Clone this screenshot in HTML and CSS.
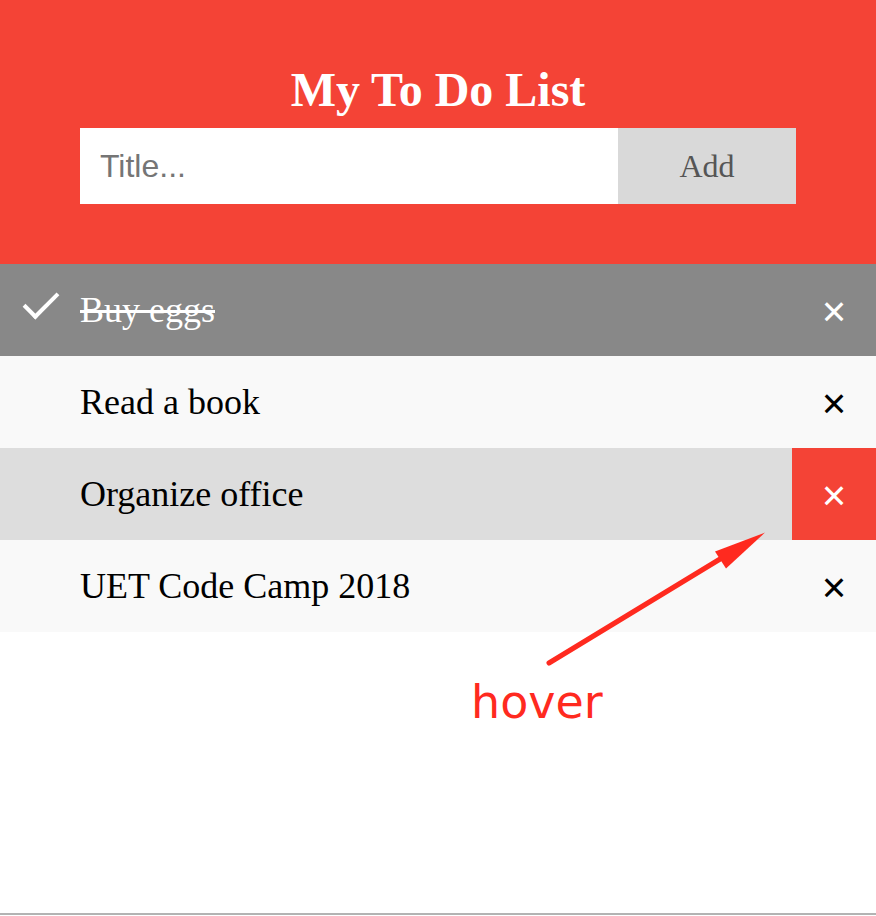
FILE: index.html
```html
<!DOCTYPE html>
<html>
<head>
<meta charset="utf-8">
<link rel="stylesheet" href="styles.css">
</head>
<body>
<div class="page">
  <div class="header">
    <h2 class="title">My To Do List</h2>
    <div class="form">
      <input class="field" type="text" placeholder="Title...">
      <span class="add-btn">Add</span>
    </div>
  </div>
  <ul class="list">
    <li class="item checked">Buy eggs<span class="close">×</span></li>
    <li class="item">Read a book<span class="close">×</span></li>
    <li class="item hovered">Organize office<span class="close">×</span></li>
    <li class="item">UET Code Camp 2018<span class="close">×</span></li>
  </ul>
  <svg class="arrow" width="876" height="916" viewBox="0 0 876 916">
    <line x1="549" y1="663" x2="730" y2="553" stroke="#ff2a1f" stroke-width="5" stroke-linecap="round"/>
    <polygon points="765,532.5 715,551.5 726,568.5" fill="#ff2a1f"/>
  </svg>
  <div class="note">hover</div>
  <div class="bottom-line"></div>
</div>
</body>
</html>
```
FILE: styles.css
```css
html, body {
  margin: 0;
  padding: 0;
  background: #fff;
}
.page {
  position: relative;
  display: flex;
  flex-direction: column;
  min-height: 916px;
  font-family: "Liberation Serif", serif;
}
.header {
  background: #f44336;
  padding: 62px 80px 60px;
}
.title {
  margin: 0 0 10px;
  color: #fff;
  text-align: center;
  font-size: 48px;
  line-height: 56px;
  font-weight: bold;
}
.form {
  display: flex;
  height: 76px;
}
.field {
  flex: 1;
  min-width: 0;
  border: none;
  margin: 0;
  padding: 0 20px;
  height: 76px;
  box-sizing: border-box;
  font-family: "Liberation Sans", sans-serif;
  font-size: 32px;
  outline: none;
  background: #fff;
}
.field::placeholder {
  color: #757575;
}
.add-btn {
  width: 178px;
  background: #d9d9d9;
  color: #555;
  font-size: 32px;
  display: flex;
  align-items: center;
  justify-content: center;
}
.list {
  margin: 0;
  padding: 0;
  list-style: none;
}
.item {
  position: relative;
  padding: 24px 84px 24px 80px;
  font-size: 36px;
  line-height: 44px;
  color: #000;
  background: #f9f9f9;
}
.item.checked {
  background: #888;
  color: #fff;
  text-decoration: line-through;
}
.item.checked::before {
  content: "";
  position: absolute;
  top: 20px;
  left: 32px;
  width: 14px;
  height: 30px;
  border-style: solid;
  border-color: #fff;
  border-width: 0 4px 4px 0;
  transform: rotate(45deg);
}
.item.hovered {
  background: #ddd;
}
.close {
  position: absolute;
  right: 0;
  top: 0;
  bottom: 0;
  width: 84px;
  display: flex;
  align-items: center;
  justify-content: center;
  padding-top: 3px;
  box-sizing: border-box;
  font-family: "Liberation Sans", sans-serif;
  font-size: 42px;
  line-height: 1;
  text-decoration: none;
}
.item.hovered .close {
  background: #f44336;
  color: #fff;
}
.arrow {
  position: absolute;
  left: 0;
  top: 0;
  pointer-events: none;
}
.note {
  position: absolute;
  left: 471px;
  top: 670px;
  font-family: "DejaVu Sans", sans-serif;
  font-size: 46px;
  line-height: 64px;
  color: #ff2a1f;
}
.bottom-line {
  margin-top: auto;
  height: 2px;
  margin-bottom: 1px;
  background: #b3b3b3;
}
```
